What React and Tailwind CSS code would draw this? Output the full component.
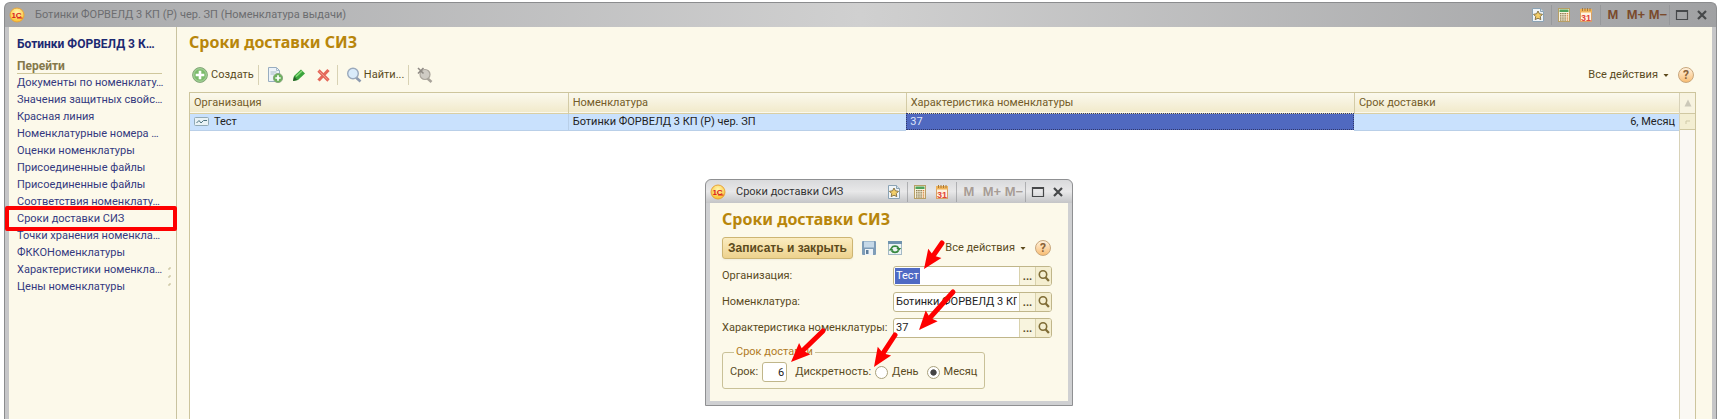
import React from "react";

const links = [
  "Документы по номенклату…",
  "Значения защитных свойс…",
  "Красная линия",
  "Номенклатурные номера …",
  "Оценки номенклатуры",
  "Присоединенные файлы",
  "Присоединенные файлы",
  "Соответствия номенклату…",
  "Сроки доставки СИЗ",
  "Точки хранения номенкла…",
  "ФККОНоменклатуры",
  "Характеристики номенкла…",
  "Цены номенклатуры",
];

const Logo = () => (
  <svg className="size-4 shrink-0" viewBox="0 0 16 16">
    <defs>
      <radialGradient id="logoFill" cx="0.5" cy="0.3" r="0.7">
        <stop offset="0" stopColor="#fff6b0" />
        <stop offset="1" stopColor="#fbc02c" />
      </radialGradient>
    </defs>
    <circle cx="8" cy="8" r="7" fill="url(#logoFill)" stroke="#e8a33a" />
    <text x="7.5" y="11" fontSize="8" fontWeight="700" textAnchor="middle" fill="#d8201c" fontFamily="Liberation Sans, sans-serif">1С</text>
    <path d="M8 11h5.5" stroke="#d8201c" strokeWidth="1" />
  </svg>
);

const StarDoc = () => (
  <svg className="h-4 w-4" viewBox="0 0 16 16">
    <path d="M2.5 1.500h8l3 3v10h-11z" fill="#f1f5f8" stroke="#8ba3b5" />
    <path d="M10.500 1.500v3h3" fill="#d5e0e8" stroke="#8ba3b5" />
    <path d="M8 4l1.400 2.800 3.100.5-2.200 2.200.5 3.100L8 11.200l-2.800 1.400.5-3.100-2.200-2.200 3.100-.5z" fill="#f3cf6b" stroke="#7d6a3c" strokeWidth="0.9" />
  </svg>
);

const Calculator = () => (
  <svg className="h-4 w-4" viewBox="0 0 16 16">
    <rect x="2.500" y="1.500" width="11" height="13" fill="#f8f3dc" stroke="#b79f66" />
    <rect x="3.500" y="2.500" width="9" height="2.500" fill="#4fa35a" />
    {[6, 8.2, 10.4, 12.4].map((y) =>
      [4, 6.2, 8.4].map((x) => <rect key={x + "-" + y} x={x} y={y} width="1.500" height="1.300" fill="#8c7b50" />)
    )}
    {[6, 8.2, 10.4, 12.4].map((y) => <rect key={y} x="10.700" y={y} width="1.500" height="1.300" fill="#d9813f" />)}
  </svg>
);

const Calendar = () => (
  <svg className="h-4 w-4" viewBox="0 0 16 16">
    <rect x="2.500" y="2.500" width="11" height="12" fill="#fff3e0" stroke="#d8a066" />
    <rect x="2" y="2" width="12" height="3.500" fill="#f0b45a" />
    <path d="M4.500 1v3M7 1v3M9.500 1v3M12 1v3" stroke="#a8793a" />
    <text x="8" y="13.500" fontSize="9" fontWeight="700" textAnchor="middle" fill="#e2463a" fontFamily="Liberation Sans, sans-serif">31</text>
  </svg>
);

const Magnifier = ({ className, color = "#7f6c35" }) => (
  <svg className={className} viewBox="0 0 14 14" fill="none" stroke={color}>
    <circle cx="6" cy="5.500" r="3.700" strokeWidth="1.600" />
    <path d="M8.700 8.500l3.200 3.500" strokeWidth="2.200" />
  </svg>
);

const Sep = () => <span className="h-5 w-px bg-[#8d8f92] opacity-60" />;

function TitleTools({ muted }) {
  const m = muted ? "text-[#a79c95]" : "text-[#7a4a2c]";
  const cls = "flex h-5 items-center justify-center font-['Liberation_Sans',Arial,sans-serif] text-[13px] font-bold";
  return (
    <div className="flex items-center">
      <button aria-label="Избранное" className="mr-[5px] flex"><StarDoc /></button>
      <Sep />
      <button aria-label="Калькулятор" className="ml-1 flex"><Calculator /></button>
      <button aria-label="Календарь" className="mr-1.5 ml-1.5 flex"><Calendar /></button>
      <Sep />
      <button className={`${cls} ${m} w-6`}>M</button>
      <button className={`${cls} ${m} w-[22px]`}>M+</button>
      <button className={`${cls} ${m} w-[22px]`}>M−</button>
      <Sep />
      <button aria-label="Развернуть" className="ml-1 flex">
        <svg className="h-4 w-4" viewBox="0 0 16 16"><path d="M2.500 3.500h11v9h-11zM2 4.500h12" fill="none" stroke="#46484a" strokeWidth="1.200" /></svg>
      </button>
      <button aria-label="Закрыть" className="ml-1 flex">
        <svg className="h-4 w-4" viewBox="0 0 16 16"><path d="M4 4l8 8M12 4l-8 8" stroke="#46484a" strokeWidth="2.200" /></svg>
      </button>
    </div>
  );
}

function AllActions() {
  return (
    <div className="flex items-center gap-2">
      <button className="flex items-center gap-1">
        Все действия
        <svg className="h-2 w-2" viewBox="0 0 8 8"><path d="M1.500 3h5L4 6z" fill="#5c4a1c" /></svg>
      </button>
      <button aria-label="Справка" className="flex size-4 items-center justify-center rounded-full border border-[#c9a77c] bg-linear-to-b from-[#fff1dc] to-[#f8bd72] text-xs font-bold text-[#8a6238]">?</button>
    </div>
  );
}

const ToolSep = () => <span className="h-5 w-px bg-[#d8d2b4]" />;

function Toolbar() {
  return (
    <div className="flex h-6 items-center pl-[3px]">
      <button className="flex items-center gap-[3px]">
        <svg className="h-4 w-4" viewBox="0 0 16 16">
          <circle cx="8" cy="8" r="7.400" fill="#7dbb6c" stroke="#87a67c" />
          <circle cx="8" cy="8" r="6.300" fill="none" stroke="#b8dcae" strokeWidth="0.800" />
          <path d="M8 3.700v8.600M3.700 8h8.600" stroke="#fff" strokeWidth="2.600" />
        </svg>
        Создать
      </button>
      <span className="ml-1 flex"><ToolSep /></span>
      <button aria-label="Скопировать" className="ml-2 flex">
        <svg className="h-4 w-4" viewBox="0 0 16 16">
          <path d="M1.500 0.500h8l3 3v11h-11z" fill="#edf3f8" stroke="#98adc0" />
          <path d="M9.500 0.500v3h3M3.500 5h6M3.500 7h4" fill="none" stroke="#a9bccb" />
          <circle cx="11" cy="11" r="4.600" fill="#6cb25c" stroke="#8ba882" />
          <path d="M11 8.300v5.400M8.300 11h5.400" stroke="#fff" strokeWidth="1.700" />
        </svg>
      </button>
      <button aria-label="Изменить" className="ml-2 flex">
        <svg className="h-4 w-4" viewBox="0 0 16 16">
          <path d="M2 14l1-5 7-6.500 4 4-7 6.500z" fill="#3aa43c" />
          <path d="M5 9.500l6-5.500" stroke="#8bdc7c" strokeWidth="1.600" />
          <path d="M2 14l1-4.500 3.500 3.500z" fill="#27602a" />
        </svg>
      </button>
      <button aria-label="Удалить" className="ml-2 flex">
        <svg className="h-4 w-4" viewBox="0 0 16 16">
          <path d="M3.500 3.500l10 10M13.500 3L3.500 13.500" stroke="#e4685a" strokeWidth="3.200" />
          <path d="M4.500 4.500l8 8" stroke="#f3a297" strokeWidth="0.800" />
        </svg>
      </button>
      <span className="ml-1.5 flex"><ToolSep /></span>
      <button className="ml-2 flex items-center gap-0.5">
        <svg className="h-4 w-4" viewBox="0 0 16 16">
          <path d="M10 10.500l4.500 4" stroke="#8d9bb0" strokeWidth="2.600" />
          <circle cx="7" cy="6.500" r="5.300" fill="#d9ebfa" stroke="#9aa9bc" strokeWidth="1.400" />
        </svg>
        Найти...
      </button>
      <span className="ml-1 flex"><ToolSep /></span>
      <button aria-label="Отменить поиск" className="ml-2 flex">
        <svg className="h-4 w-4" viewBox="0 0 16 16">
          <path d="M10 11l4.500 4" stroke="#a8a39a" strokeWidth="2.600" />
          <circle cx="8" cy="7.500" r="5" fill="#cfcbc4" stroke="#aaa59c" strokeWidth="1.200" />
          <path d="M1 1l5.500 5.500M6.500 1L1 6.500" stroke="#8f8a84" strokeWidth="1.600" />
        </svg>
      </button>
      <div className="ml-auto pr-[2px]"><AllActions /></div>
    </div>
  );
}

function Field({ id, label, value, selected }) {
  return (
    <div className="flex items-center">
      <label htmlFor={id} className="w-[171px] whitespace-nowrap">{label}</label>
      <div className="flex h-5 flex-1 overflow-hidden rounded-[3px] border border-[#c0b68a] bg-white">
        <input id={id} defaultValue={value} className={selected ? "min-w-0 flex-1 bg-[linear-gradient(#4f6ac4,#4f6ac4)] bg-[length:25px_16px] bg-[position:1px_1px] bg-no-repeat px-0.5 text-white outline-none" : "min-w-0 flex-1 px-0.5 text-[#222] outline-none"} />
        <button aria-label={"Выбрать: " + label} className="flex w-4 items-end justify-center border-l border-[#d9d2ad] bg-[#f8f4de] font-bold">...</button>
        <button aria-label={"Открыть: " + label} className="flex w-4 items-center justify-center border-l border-[#d9d2ad] bg-[#f4eed0]">
          <Magnifier className="h-3.5 w-3.5" />
        </button>
      </div>
    </div>
  );
}

const arrows = [
  [236, 63, 218, 89],
  [247, 112, 213, 150],
  [117, 151, 85, 182],
  [189, 155, 168, 187],
];

function Arrow({ points: [x1, y1, x2, y2] }) {
  const len = Math.hypot(x2 - x1, y2 - y1);
  const angle = (Math.atan2(y2 - y1, x2 - x1) * 180) / Math.PI;
  return (
    <g transform={`translate(${x1} ${y1}) rotate(${angle})`} fill="#fe0000">
      <path d={`M0 0H${len - 14}`} stroke="#fe0000" strokeWidth="5" strokeLinecap="round" />
      <path d={`M${len} 0l-19 -8l2.500 8l-2.500 8z`} />
    </g>
  );
}

function Dialog() {
  return (
    <section role="dialog" aria-label="Сроки доставки СИЗ" className="absolute top-[179px] left-[705px] w-[368px] rounded-t-md border border-[#8f9092] bg-[#cfd0d2] px-1 pb-1">
      <header className="-mx-1 flex h-[23px] items-center rounded-t-md bg-linear-to-b from-[#d9dadc] via-[#e8e8e9] to-[#c4c5c7] pr-1.5 pl-1">
        <Logo />
        <span className="mr-auto pl-2.5 text-[#333]">Сроки доставки СИЗ</span>
        <TitleTools muted />
      </header>
      <div className="bg-[#fcf9ea] px-3 pt-1 pb-3">
        <h2 className="font-['Noto_Sans'] text-base leading-6 font-bold text-[#b8860b]">Сроки доставки СИЗ</h2>
        <div className="mt-1.5 flex h-[22px] items-center">
          <button className="h-[22px] w-[131px] rounded-[3px] border border-[#cdb573] bg-linear-to-b from-[#fbecc0] to-[#edd28d] font-['Liberation_Sans',Arial,sans-serif] text-xs font-bold whitespace-nowrap text-[#5c4a1c] shadow-xs">Записать и закрыть</button>
          <button aria-label="Записать" className="ml-2 flex">
            <svg className="h-4 w-4" viewBox="0 0 16 16">
              <rect x="1" y="1" width="14" height="14" rx="1" fill="#7f9db8" />
              <rect x="3" y="1.500" width="10" height="6" fill="#c6d9e8" />
              <rect x="4" y="9" width="8" height="6" fill="#eef3f7" />
              <rect x="5" y="10" width="2.500" height="4" fill="#5f7f9c" />
            </svg>
          </button>
          <button aria-label="Перечитать" className="ml-2.5 flex">
            <svg className="h-4 w-4" viewBox="0 0 16 16">
              <rect x="1.500" y="1.500" width="13" height="13" fill="#eef4f6" stroke="#a4b9c6" />
              <rect x="1" y="1" width="14" height="3" fill="#6f93ae" />
              <path d="M4.500 8a3.800 3 0 0 1 7 0" fill="none" stroke="#37883f" strokeWidth="1.600" />
              <path d="M11.500 10.500a3.800 3 0 0 1-7 0" fill="none" stroke="#37883f" strokeWidth="1.600" />
              <path d="M9.300 8h5l-2.500 3zM1.700 10.500h5L4.200 7.500z" fill="#37883f" />
            </svg>
          </button>
          <div className="mr-[5px] ml-auto"><AllActions /></div>
        </div>
        <div className="mt-[7px] mr-1 flex flex-col gap-1.5">
          <Field id="org" label="Организация:" value="Тест" selected />
          <Field id="nom" label="Номенклатура:" value="Ботинки ФОРВЕЛД 3 КП (Р) чер. ЗП" />
          <Field id="chr" label="Характеристика номенклатуры:" value="37" />
        </div>
        <fieldset className="mt-1.5 w-[260px] rounded-[3px] border border-[#c9c198] px-[7px] pb-1">
          <legend className="ml-1 px-0.5 leading-4 text-[#b07a24]">Срок доставки</legend>
          <div className="flex h-6 items-center whitespace-nowrap">
            <label htmlFor="term">Срок:</label>
            <input id="term" defaultValue="6" className="ml-1 h-5 w-[25px] rounded-[3px] border border-[#c0b68a] bg-white px-0.5 text-right text-[#222]" />
            <span className="ml-2">Дискретность:</span>
            <label className="ml-1 flex items-center gap-1">
              <input type="radio" name="unit" className="size-[13px] appearance-none rounded-full border border-[#a9a17c] bg-white" />
              День
            </label>
            <label className="ml-2 flex items-center gap-1">
              <input type="radio" name="unit" defaultChecked className="size-[13px] appearance-none rounded-full border border-[#a9a17c] bg-white checked:bg-radial checked:from-[#444] checked:from-35% checked:to-white checked:to-45%" />
              Месяц
            </label>
          </div>
        </fieldset>
      </div>
      <svg className="pointer-events-none absolute top-0 left-0 h-[226px] w-[368px]" viewBox="0 0 368 226">
        {arrows.map((a) => <Arrow key={a.join()} points={a} />)}
      </svg>
    </section>
  );
}

const th = "border-r border-[#d3cba6] pl-1 text-left font-normal";

export default function App() {
  return (
    <div className="relative flex h-screen min-h-96 flex-col bg-white px-1 pt-0.5 font-['Roboto','Liberation_Sans',sans-serif] text-[11px] leading-4 text-[#5a4b1e]">
      <header className="flex h-[25px] shrink-0 items-center rounded-t-md border border-b-0 border-[#8b8c8e] bg-linear-to-r from-[#a7a8aa] via-[#d0d0d0] to-[#a0a1a3] pr-1.5 pl-1">
        <Logo />
        <span className="mr-auto pl-2.5 text-[#6c6d70]">Ботинки ФОРВЕЛД 3 КП (Р) чер. ЗП (Номенклатура выдачи)</span>
        <TitleTools />
      </header>
      <div className="flex min-h-0 flex-1 border-x border-[#8b8c8e] bg-[#c6c6c8] px-1">
        <div className="flex min-w-0 flex-1 bg-[#fcf9ea]">
          <nav className="relative w-[168px] shrink-0 border-r border-[#c9c3a0] pt-2 pr-3.5 pl-2 text-[#34397f]">
            <div className="h-[18px] text-xs leading-[18px] font-bold whitespace-nowrap text-[#1c2a72]">Ботинки ФОРВЕЛД 3 К…</div>
            <div className="mt-[5px] h-4 border-b border-[#cfc79c] text-xs leading-4 font-bold text-[#85784a]">Перейти</div>
            <ul>
              {links.map((text, i) => (
                <li key={i} className="relative h-[17px] leading-[17px] whitespace-nowrap">
                  <a href="#" className="block">{text}</a>
                  {i === 8 && <span className="pointer-events-none absolute -top-1 -left-3 h-[25px] w-[172px] rounded-xs border-4 border-[#fe0000]" />}
                </li>
              ))}
            </ul>
            <svg className="absolute right-1 bottom-[130px] h-6 w-1" viewBox="0 0 4 24">
              <path d="M1 5V3h2M1 13v-2h2M1 21v-2h2" fill="none" stroke="#c2bb93" />
            </svg>
          </nav>
          <main className="flex min-w-0 flex-1 flex-col pr-4 pl-3">
            <h1 className="pt-[3px] font-['Noto_Sans'] text-base leading-6 font-bold text-[#b8860b]">Сроки доставки СИЗ</h1>
            <div className="mt-[9px] mb-[5px]"><Toolbar /></div>
            <div className="flex min-h-0 flex-1 border-x border-t border-[#cdc59d] bg-white">
              <div className="min-w-0 flex-1">
                <table className="w-full table-fixed border-collapse">
                  <colgroup>
                    <col className="w-[25.4%]" />
                    <col className="w-[22.7%]" />
                    <col className="w-[30.1%]" />
                    <col />
                  </colgroup>
                  <thead>
                    <tr className="h-5 border-b border-[#d9cfa4] bg-linear-to-b from-[#fbf9ee] to-[#f1eacb] text-[#745c28]">
                      <th className={th}>Организация</th>
                      <th className={th}>Номенклатура</th>
                      <th className={th}>Характеристика номенклатуры</th>
                      <th className="pl-1 text-left font-normal">Срок доставки</th>
                    </tr>
                  </thead>
                  <tbody>
                    <tr className="h-[17px] bg-[#c9e1fd] text-[#222]">
                      <td className="border-r border-b border-[#b9cfe8] pl-1">
                        <span className="flex items-center gap-1">
                          <svg className="h-3 w-4" viewBox="0 0 16 12">
                            <rect x="0.500" y="1.500" width="14" height="8" rx="1" fill="#e9f2f6" stroke="#92aab6" />
                            <path d="M2.500 7l2.500-2.500 2 2.500 2.500-2.500h3.500" fill="none" stroke="#4d7482" />
                          </svg>
                          Тест
                        </span>
                      </td>
                      <td className="border-b border-[#b9cfe8] pl-1">Ботинки ФОРВЕЛД 3 КП (Р) чер. ЗП</td>
                      <td className="bg-[#5069c0] pl-1 text-[#dfe6fb] outline-1 -outline-offset-1 outline-[#30376a] outline-dotted">37</td>
                      <td className="border-b border-[#b9cfe8] pr-1 text-right">6, Месяц</td>
                    </tr>
                  </tbody>
                </table>
              </div>
              <div className="w-4 shrink-0 border-l border-[#d8d2b8] bg-[#faf8f3]">
                <div className="flex h-[21px] items-center justify-center border-b border-[#d0c8a2] bg-[#f7f3e0]">
                  <svg className="h-2 w-2" viewBox="0 0 8 8"><path d="M4 0.500L7.500 7.500h-7z" fill="#cbc8b8" /></svg>
                </div>
                <div className="flex h-4 items-center justify-center border-b border-[#d0c8a2] bg-[#f3eed2]">
                  <svg className="h-2 w-2" viewBox="0 0 8 8"><path d="M2 6V3h4" fill="none" stroke="#cfc9a8" /></svg>
                </div>
              </div>
            </div>
          </main>
        </div>
      </div>
      <Dialog />
    </div>
  );
}
